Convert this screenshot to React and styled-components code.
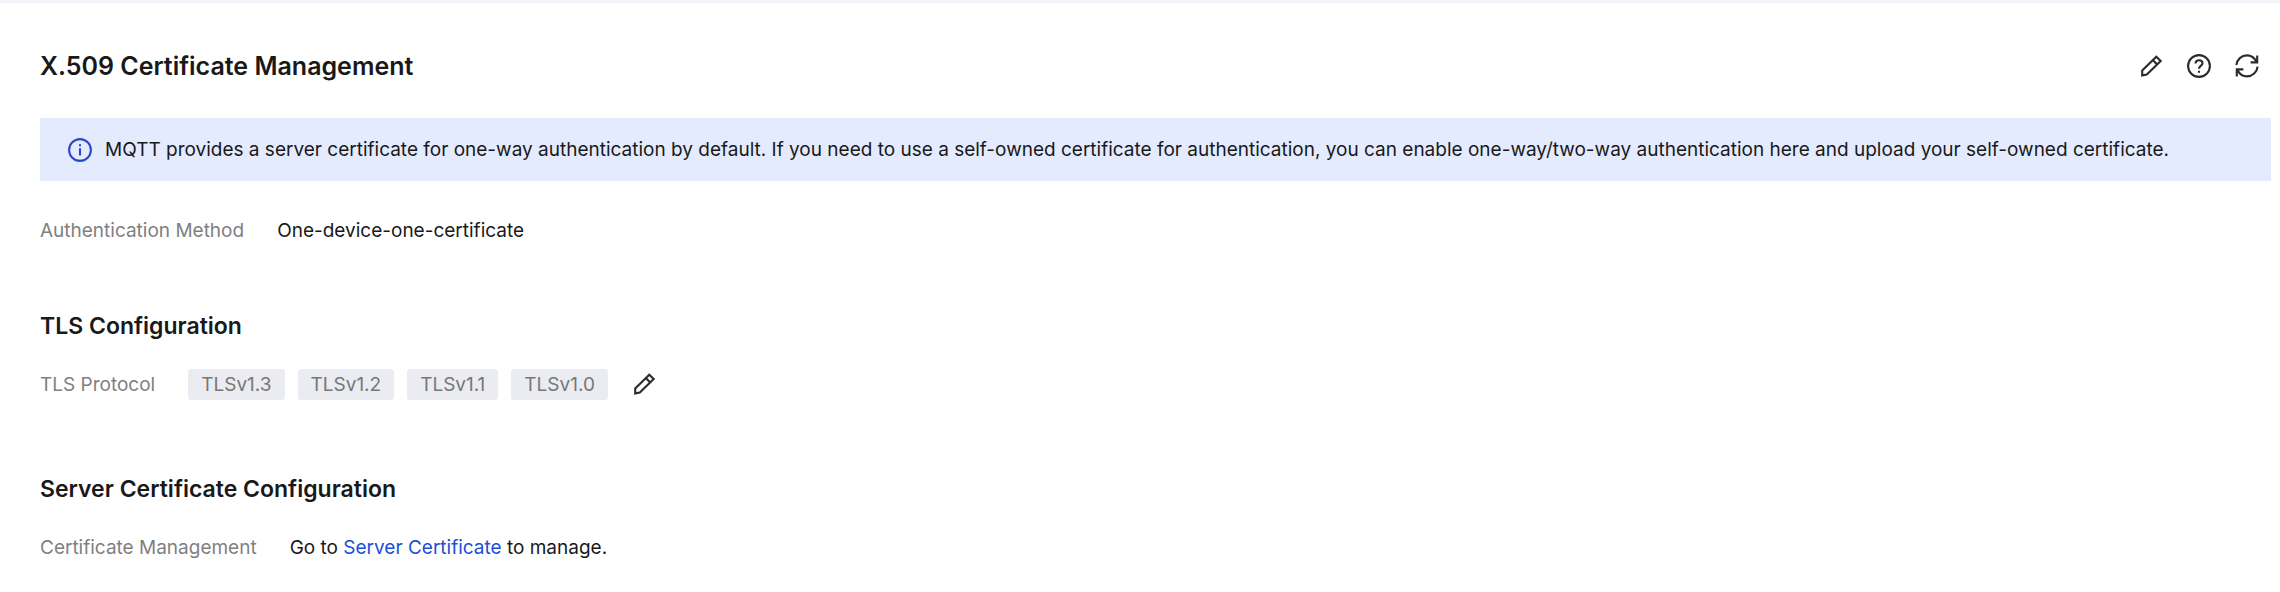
import React from "react";
import styled, { createGlobalStyle } from "styled-components";

const GlobalStyle = createGlobalStyle`
  *, *::before, *::after { box-sizing: border-box; }
  body {
    margin: 0;
    background: #ffffff;
    color: #191919;
    font-family: Inter, "Liberation Sans", sans-serif;
    font-size: 19px;
    line-height: 28px;
  }
`;

const Page = styled.main`
  border-top: 3px solid #f2f3f8;
  padding: 45px 9px 30px 40px;
`;

const Header = styled.header`
  display: flex;
  align-items: center;
  justify-content: space-between;
  padding-right: 12px;
`;

const Title = styled.h1`
  margin: 0;
  font-size: 25px;
  font-weight: 600;
  line-height: 36px;
`;

const Actions = styled.div`
  display: flex;
  gap: 24px;
`;

const IconButton = styled.button`
  display: flex;
  padding: 0;
  border: 0;
  background: none;
  color: #2b2b2b;
  cursor: pointer;
`;

const Notice = styled.div`
  display: flex;
  align-items: center;
  gap: 13px;
  margin-top: 34px;
  padding: 18px 28px 17px;
  background: #e5ebff;

  svg {
    flex: none;
    color: #2a4bc4;
  }
`;

const NoticeText = styled.p`
  margin: 0;
`;

const Section = styled.section`
  margin-top: ${({ $gap }) => $gap}px;
`;

const SectionTitle = styled.h2`
  margin: 0 0 26px;
  font-size: 23px;
  font-weight: 600;
  line-height: 32px;
`;

const Fields = styled.dl`
  display: flex;
  align-items: center;
  gap: 33px;
  margin: 0;
`;

const Label = styled.dt`
  padding: 3px 0 1px;
  color: #808080;
`;

const Value = styled.dd`
  display: flex;
  align-items: center;
  gap: 24px;
  margin: 0;
`;

const ValueText = styled.span`
  padding: 3px 0 1px;
`;

const Tags = styled.ul`
  display: flex;
  gap: 13px;
  margin: 0;
  padding: 0;
  list-style: none;
`;

const Tag = styled.li`
  padding: 2px 13px 1px;
  border-radius: 3px;
  background: #ebecf1;
  color: #777777;
`;

const Link = styled.a`
  color: #1d4ed8;
  text-decoration: none;
`;

const Icon = ({ children }) => (
  <svg
    width="24"
    height="24"
    viewBox="0 0 24 24"
    fill="none"
    stroke="currentColor"
    strokeWidth="2.1"
    aria-hidden="true"
  >
    {children}
  </svg>
);

const PencilIcon = () => (
  <Icon>
    <path d="M3.2 21.4V16.4L17.3 2.7L21.7 7L7.8 20.6ZM13.8 6.1L18.2 10.4" />
  </Icon>
);

const HelpIcon = () => (
  <Icon>
    <circle cx="12" cy="12" r="10.9" />
    <path d="M8.5 9.6C8.5 7.4 10 6.3 12 6.3C14 6.3 15.5 7.4 15.5 9.2C15.5 11.7 12 11.6 12 14.8M12 16.8V18.8" />
  </Icon>
);

const RefreshIcon = () => (
  <Icon>
    <path d="M1.4 11C2 5.4 6.4 1.4 12 1.4C16 1.4 19.5 3.8 21.4 7.6M22.2 1.6V8.4H15.6M22.6 12.6C22 18.2 17.6 22.4 12 22.4C8 22.4 4.5 20 2.6 16.2M1.8 22.4V15.4H8.4" />
  </Icon>
);

const InfoIcon = () => (
  <Icon>
    <circle cx="12" cy="12" r="10.9" />
    <path d="M12 10.2V17.6M12 6.2V8.2" />
  </Icon>
);

const protocols = ["TLSv1.3", "TLSv1.2", "TLSv1.1", "TLSv1.0"];

export default function App() {
  return (
    <>
      <GlobalStyle />
      <Page>
        <Header>
          <Title>X.509 Certificate Management</Title>
          <Actions>
            <IconButton type="button" aria-label="Edit"><PencilIcon /></IconButton>
            <IconButton type="button" aria-label="Help"><HelpIcon /></IconButton>
            <IconButton type="button" aria-label="Refresh"><RefreshIcon /></IconButton>
          </Actions>
        </Header>

        <Notice role="note">
          <InfoIcon />
          <NoticeText>
            MQTT provides a server certificate for one-way authentication by default. If you need to
            use a self-owned certificate for authentication, you can enable one-way/two-way
            authentication here and upload your self-owned certificate.
          </NoticeText>
        </Notice>

        <Section $gap={33}>
          <Fields>
            <Label>Authentication Method</Label>
            <Value>
              <ValueText>One-device-one-certificate</ValueText>
            </Value>
          </Fields>
        </Section>

        <Section $gap={64}>
          <SectionTitle>TLS Configuration</SectionTitle>
          <Fields>
            <Label>TLS Protocol</Label>
            <Value>
              <Tags>
                {protocols.map((name) => (
                  <Tag key={name}>{name}</Tag>
                ))}
              </Tags>
              <IconButton type="button" aria-label="Edit TLS protocol"><PencilIcon /></IconButton>
            </Value>
          </Fields>
        </Section>

        <Section $gap={73}>
          <SectionTitle>Server Certificate Configuration</SectionTitle>
          <Fields>
            <Label>Certificate Management</Label>
            <Value>
              <ValueText>
                Go to <Link href="#server-certificate">Server Certificate</Link> to manage.
              </ValueText>
            </Value>
          </Fields>
        </Section>
      </Page>
    </>
  );
}
